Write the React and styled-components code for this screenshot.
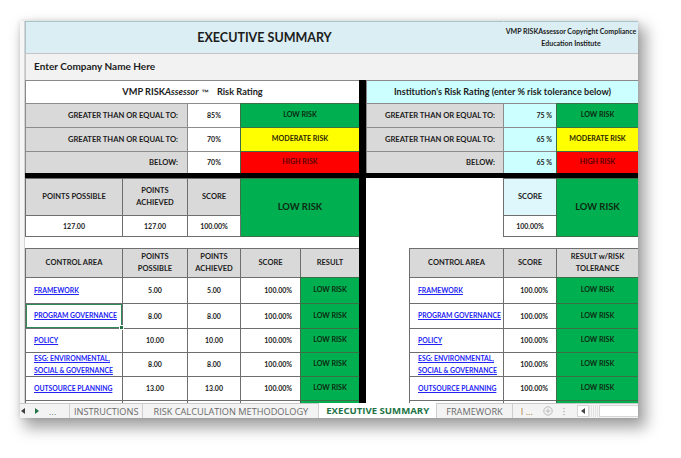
import React from 'react';
import styled, { createGlobalStyle, css } from 'styled-components';

const GlobalStyle = createGlobalStyle`
  html, body { margin: 0; padding: 0; background: #fff; }
  body { font-family: Lato, "Open Sans", "Liberation Sans", sans-serif; color: #1c1c1c; }
`;

const Page = styled.div`
  width: 681px;
  height: 458px;
  box-sizing: border-box;
  padding: 21px 0 0 20px;
  background: #fff;
  overflow: hidden;
`;

const Frame = styled.div`
  width: 618px;
  background: #fff;
  box-shadow: 6px 8px 14px 2px rgba(0, 0, 0, 0.36), 0 0 5px rgba(0, 0, 0, 0.12);
`;

const Body = styled.div`
  display: flex;
`;

const Gutter = styled.div`
  width: 4px;
  background: #f6f6f6;
  border-right: 1px solid #d4d4d4;
`;

const Sheet = styled.div`
  display: grid;
  grid-template-columns: 97px 65px 53px 60px 59px 7px 43px 94px 53px 82px;
  grid-template-rows: 32px 27px 23px 24px 24px 22px 5px 37px 21px 12px 29px 26px 25px 24px 24px 24px 3px;
  overflow: hidden;
`;

const Cell = styled.div`
  grid-column: ${p => p.$col};
  grid-row: ${p => p.$row};
  position: relative;
  display: flex;
  flex-direction: column;
  justify-content: center;
  align-items: ${p => (p.$align === 'left' ? 'flex-start' : p.$align === 'right' ? 'flex-end' : 'center')};
  text-align: ${p => p.$align || 'center'};
  padding: 0 ${p => (p.$pad != null ? p.$pad : 3)}px;
  margin: 0 -1px -1px 0;
  background: ${p => p.$bg || '#fff'};
  border: 1px solid ${p => p.$line || '#6e6e6e'};
  font-size: 7px;
  font-weight: 700;
  line-height: 1.55;
  white-space: nowrap;
  overflow: hidden;
  ${p => p.$selected && css`
    box-shadow: inset 0 0 0 1px #2e8a57;
    overflow: visible;
    &::after {
      content: '';
      position: absolute;
      right: -2px;
      bottom: -2px;
      width: 3px;
      height: 3px;
      background: #217346;
      border: 1px solid #fff;
      z-index: 2;
    }
  `}
`;

const TitleCell = styled(Cell)`
  background: #daeef3;
  border-color: #a9c4cb;
  border-bottom-color: #333;
  font-size: 12.5px;
`;

const CopyCell = styled(Cell)`
  background: #daeef3;
  border-color: #a9c4cb;
  border-bottom-color: #333;
  border-left-color: #daeef3;
  font-size: 7px;
  line-height: 1.7;
  padding: 0;
  overflow: visible;
`;

const CompanyCell = styled(Cell)`
  background: #f2f2f2;
  border-color: #c4c4c4;
  border-bottom-color: #333;
  font-size: 10px;
`;

const RatingTitle = styled(Cell)`
  font-size: ${p => (p.$small ? 9.1 : 9.2)}px;
  font-weight: 700;
  border-color: #8a8a8a;
`;

const Label = styled(Cell)`
  background: #d9d9d9;
  border-color: #8c8c8c;
  font-size: 7.6px;
`;

const riskColors = {
  low: { bg: '#00b050', fg: '#0d2a12' },
  mod: { bg: '#ffff00', fg: '#2b2500' },
  high: { bg: '#ff0000', fg: '#5a0000' },
};

const Risk = styled(Cell)`
  background: ${p => riskColors[p.$level || 'low'].bg};
  color: ${p => riskColors[p.$level || 'low'].fg};
  border-color: #3d6f47;
  font-size: ${p => (p.$big ? 9.4 : 7.1)}px;
`;

const GrayHead = styled(Cell)`
  background: ${p => p.$bg || '#d9d9d9'};
  border-color: #6e6e6e;
  font-size: 7.5px;
  line-height: 1.6;
`;

const Link = styled.span`
  color: #2323f5;
  text-decoration: underline;
  font-size: 6.8px;
  line-height: 1.65;
`;

const Bar = styled.div`
  grid-column: ${p => p.$col};
  grid-row: ${p => p.$row};
  background: #000;
  z-index: 1;
`;

const Brand = styled.span`
  font-style: italic;
`;

const Tm = styled.span`
  font-family: "Liberation Sans", sans-serif;
  font-size: 7.5px;
  margin: 0 8px 0 3px;
`;

/* ---------- sheet tabs ---------- */

const TabBar = styled.div`
  display: flex;
  align-items: stretch;
  height: 14px;
  background: #f3f3f3;
  border-top: 1px solid #c9c9c9;
  font-family: "Open Sans", "Liberation Sans", sans-serif;
  font-size: 9.2px;
  color: #6a6a6a;
  white-space: nowrap;
`;

const Nav = styled.div`
  display: flex;
  align-items: center;
  gap: 10px;
  width: 48px;
  padding-left: 1px;
  border-right: 1px solid #cfcfcf;
  color: #3a7a52;
  font-size: 8px;
  letter-spacing: 0.5px;
`;

const Tab = styled.div`
  display: flex;
  align-items: center;
  padding: 0 ${p => p.$pad || 8}px;
  border-right: 1px solid #cfcfcf;
  background: ${p => (p.$active ? '#fff' : 'transparent')};
  color: ${p => (p.$active ? '#217346' : '#6a6a6a')};
  font-weight: ${p => (p.$active ? 700 : 400)};
  font-size: ${p => (p.$active ? '9.6px' : 'inherit')};
  margin-top: ${p => (p.$active ? '-1px' : 0)};
`;

const Extra = styled.div`
  display: flex;
  align-items: center;
  gap: 10px;
  padding: 0 8px;
  color: #8a8a8a;
`;

const Scroll = styled.div`
  flex: 1;
  display: flex;
  align-items: stretch;
  margin: 1px 0 1px 4px;
`;

const ScrollBtn = styled.div`
  width: 10px;
  display: flex;
  align-items: center;
  justify-content: center;
  border: 1px solid #d6d6d6;
  background: #fff;
`;

const Grip = styled.div`
  width: 10px;
  background: repeating-linear-gradient(90deg, #e2e2e2 0 1px, #f6f6f6 1px 2px);
`;

const Track = styled.div`
  flex: 1;
  background: #fff;
  border: 1px solid #d6d6d6;
  border-right: none;
`;

const Tri = ({ dir = 'left', color = '#3f3f3f' }) => (
  <svg width="4" height="6" viewBox="0 0 4 6">
    <path d={dir === 'left' ? 'M4 0 L0 3 L4 6 Z' : 'M0 0 L4 3 L0 6 Z'} fill={color} />
  </svg>
);

const PlusCircle = () => (
  <svg width="10" height="10" viewBox="0 0 10 10">
    <circle cx="5" cy="5" r="4.2" fill="none" stroke="#b5b5b5" strokeWidth="0.9" />
    <path d="M5 2.6 V7.4 M2.6 5 H7.4" stroke="#b5b5b5" strokeWidth="0.9" />
  </svg>
);

const VDots = () => (
  <svg width="2" height="9" viewBox="0 0 2 9">
    <circle cx="1" cy="1.5" r="0.7" fill="#aaa" />
    <circle cx="1" cy="4.5" r="0.7" fill="#aaa" />
    <circle cx="1" cy="7.5" r="0.7" fill="#aaa" />
  </svg>
);

const ratingRows = [
  { label: 'GREATER THAN OR EQUAL TO:', mine: '85%', theirs: '75 %', level: 'low', text: 'LOW RISK' },
  { label: 'GREATER THAN OR EQUAL TO:', mine: '70%', theirs: '65 %', level: 'mod', text: 'MODERATE RISK' },
  { label: 'BELOW:', mine: '70%', theirs: '65 %', level: 'high', text: 'HIGH RISK' },
];

const areas = [
  { name: ['FRAMEWORK'], possible: '5.00', achieved: '5.00' },
  { name: ['PROGRAM GOVERNANCE'], possible: '8.00', achieved: '8.00', selected: true },
  { name: ['POLICY'], possible: '10.00', achieved: '10.00' },
  { name: ['ESG: ENVIRONMENTAL,', 'SOCIAL & GOVERNANCE'], possible: '8.00', achieved: '8.00' },
  { name: ['OUTSOURCE PLANNING'], possible: '13.00', achieved: '13.00' },
];

function AreaName({ lines }) {
  return lines.map(l => <Link key={l}>{l}</Link>);
}

export default function App() {
  return (
    <Page>
      <GlobalStyle />
      <Frame>
        <Body>
          <Gutter />
          <Sheet>
            <TitleCell $col="1 / 9" $row="1">EXECUTIVE SUMMARY</TitleCell>
            <CopyCell $col="9 / 11" $row="1">
              <span>VMP RISKAssessor Copyright Compliance</span>
              <span>Education Institute</span>
            </CopyCell>

            <CompanyCell $col="1 / 11" $row="2" $align="left" $pad={8}>Enter Company Name Here</CompanyCell>

            <RatingTitle $col="1 / 6" $row="3">
              <span>VMP RISK<Brand>Assessor</Brand><Tm>™</Tm>Risk Rating</span>
            </RatingTitle>
            <RatingTitle $col="7 / 11" $row="3" $bg="#ccffff" $small>
              Institution's Risk Rating (enter % risk tolerance below)
            </RatingTitle>

            {ratingRows.map((r, i) => (
              <React.Fragment key={i}>
                <Label $col="1 / 3" $row={4 + i} $align="right" $pad={9}>{r.label}</Label>
                <Cell $col="3" $row={4 + i} $line="#8c8c8c">{r.mine}</Cell>
                <Risk $col="4 / 6" $row={4 + i} $level={r.level}>{r.text}</Risk>
                <Label $col="7 / 9" $row={4 + i} $align="right" $pad={8}>{r.label}</Label>
                <Cell $col="9" $row={4 + i} $bg="#ccffff" $line="#8c8c8c" $align="right" $pad={4}>{r.theirs}</Cell>
                <Risk $col="10" $row={4 + i} $level={r.level}>{r.text}</Risk>
              </React.Fragment>
            ))}

            <GrayHead $col="1" $row="8">POINTS POSSIBLE</GrayHead>
            <GrayHead $col="2" $row="8"><span>POINTS</span><span>ACHIEVED</span></GrayHead>
            <GrayHead $col="3" $row="8">SCORE</GrayHead>
            <Risk $col="4 / 6" $row="8 / 10" $big>LOW RISK</Risk>
            <Cell $col="1" $row="9">127.00</Cell>
            <Cell $col="2" $row="9">127.00</Cell>
            <Cell $col="3" $row="9">100.00%</Cell>

            <GrayHead $col="9" $row="8" $bg="#ddf7fc">SCORE</GrayHead>
            <Cell $col="9" $row="9">100.00%</Cell>
            <Risk $col="10" $row="8 / 10" $big>LOW RISK</Risk>

            <GrayHead $col="1" $row="11">CONTROL AREA</GrayHead>
            <GrayHead $col="2" $row="11"><span>POINTS</span><span>POSSIBLE</span></GrayHead>
            <GrayHead $col="3" $row="11"><span>POINTS</span><span>ACHIEVED</span></GrayHead>
            <GrayHead $col="4" $row="11">SCORE</GrayHead>
            <GrayHead $col="5" $row="11">RESULT</GrayHead>
            <GrayHead $col="8" $row="11">CONTROL AREA</GrayHead>
            <GrayHead $col="9" $row="11">SCORE</GrayHead>
            <GrayHead $col="10" $row="11"><span>RESULT w/RISK</span><span>TOLERANCE</span></GrayHead>

            {areas.map((a, i) => (
              <React.Fragment key={i}>
                <Cell $col="1" $row={12 + i} $align="left" $pad={8} $selected={a.selected}>
                  <AreaName lines={a.name} />
                </Cell>
                <Cell $col="2" $row={12 + i}>{a.possible}</Cell>
                <Cell $col="3" $row={12 + i}>{a.achieved}</Cell>
                <Cell $col="4" $row={12 + i} $align="right" $pad={8}>100.00%</Cell>
                <Risk $col="5" $row={12 + i}>LOW RISK</Risk>
                <Cell $col="8" $row={12 + i} $align="left" $pad={8}>
                  <AreaName lines={a.name} />
                </Cell>
                <Cell $col="9" $row={12 + i} $align="right" $pad={8}>100.00%</Cell>
                <Risk $col="10" $row={12 + i}>LOW RISK</Risk>
              </React.Fragment>
            ))}

            {[1, 2, 3, 4, 8, 9].map(c => (
              <Cell key={c} $col={String(c)} $row="17" />
            ))}
            <Risk $col="5" $row="17" />
            <Risk $col="10" $row="17" />

            <Bar $col="1 / 11" $row="7" />
            <Bar $col="6" $row="3 / 18" />
          </Sheet>
        </Body>

        <TabBar>
          <Nav>
            <Tri dir="left" />
            <Tri dir="right" color="#217346" />
            <span>...</span>
          </Nav>
          <Tab $pad={4}>INSTRUCTIONS</Tab>
          <Tab $pad={10}>RISK CALCULATION METHODOLOGY</Tab>
          <Tab $active $pad={7}>EXECUTIVE SUMMARY</Tab>
          <Tab $pad={9}>FRAMEWORK</Tab>
          <Extra>
            <span style={{ color: '#b07a3a' }}>I ...</span>
            <PlusCircle />
            <VDots />
          </Extra>
          <Scroll>
            <ScrollBtn><Tri dir="left" color="#444" /></ScrollBtn>
            <Grip />
            <Track />
          </Scroll>
        </TabBar>
      </Frame>
    </Page>
  );
}
